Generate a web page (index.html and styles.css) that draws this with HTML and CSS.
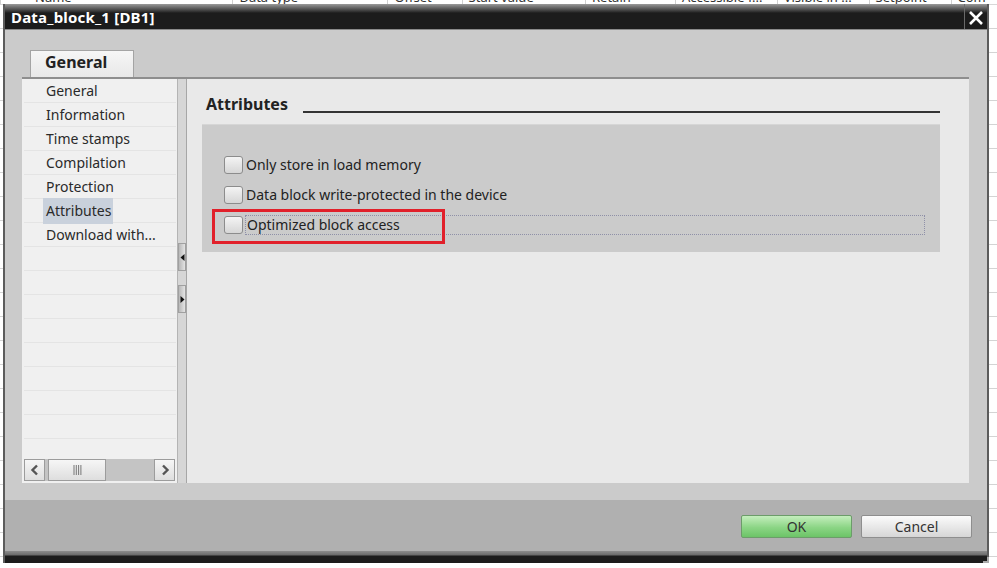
FILE: index.html
```html
<!DOCTYPE html>
<html lang="en">
<head>
    <meta charset="UTF-8">
    <title>Data_block_1 [DB1]</title>
    <link rel="stylesheet" href="styles.css">
</head>
<body>
    <!-- block editor table behind the dialog -->
    <div class="sheet">
        <div class="sheet-head">
            <span class="col c1">Name</span>
            <span class="col c2">Data type</span>
            <span class="col c3">Offset</span>
            <span class="col c4">Start value</span>
            <span class="col c5">Retain</span>
            <span class="col c6">Accessible f...</span>
            <span class="col c7">Visible in ...</span>
            <span class="col c8">Setpoint</span>
            <span class="col c9">Com</span>
        </div>
        <div class="sheet-row"></div><div class="sheet-row"></div><div class="sheet-row"></div>
        <div class="sheet-row"></div><div class="sheet-row"></div><div class="sheet-row"></div>
        <div class="sheet-row"></div><div class="sheet-row"></div><div class="sheet-row"></div>
        <div class="sheet-row"></div><div class="sheet-row"></div><div class="sheet-row"></div>
        <div class="sheet-row"></div><div class="sheet-row"></div><div class="sheet-row"></div>
        <div class="sheet-row"></div><div class="sheet-row"></div><div class="sheet-row"></div>
        <div class="sheet-row"></div><div class="sheet-row"></div><div class="sheet-row"></div>
        <div class="sheet-row"></div><div class="sheet-row"></div>
    </div>

    <div class="dialog">
        <div class="titlebar">
            <span class="title">Data_block_1 [DB1]</span>
            <span class="close">
                <svg width="16" height="16" viewBox="0 0 16 16"><path d="M2 2 L14 14 M14 2 L2 14" stroke="#fff" stroke-width="2.6" fill="none"/></svg>
            </span>
        </div>

        <div class="body">
            <div class="tabs">
                <div class="tab">General</div>
            </div>
            <div class="frame">
                <div class="nav">
                    <ul class="nav-list">
                        <li>General</li>
                        <li>Information</li>
                        <li>Time stamps</li>
                        <li>Compilation</li>
                        <li>Protection</li>
                        <li><span class="selected">Attributes</span></li>
                        <li>Download with...</li>
                        <li></li><li></li><li></li><li></li><li></li>
                        <li></li><li></li><li></li><li></li>
                    </ul>
                    <div class="hscroll">
                        <span class="sbtn">
                            <svg width="10" height="12" viewBox="0 0 10 12"><path d="M7 1.5 L2.5 6 L7 10.5" stroke="#555" stroke-width="2.4" fill="none"/></svg>
                        </span>
                        <span class="thumb">
                            <svg width="9" height="10" viewBox="0 0 9 10"><path d="M1 0v10M3.3 0v10M5.6 0v10M7.9 0v10" stroke="#777" stroke-width="1"/></svg>
                        </span>
                        <span class="track"></span>
                        <span class="sbtn">
                            <svg width="10" height="12" viewBox="0 0 10 12"><path d="M3 1.5 L7.5 6 L3 10.5" stroke="#555" stroke-width="2.4" fill="none"/></svg>
                        </span>
                    </div>
                </div>

                <div class="splitter">
                    <span class="split-btn"><svg width="5" height="7" viewBox="0 0 5 7"><path d="M4.5 0 L0.5 3.5 L4.5 7Z" fill="#111"/></svg></span>
                    <span class="split-btn"><svg width="5" height="7" viewBox="0 0 5 7"><path d="M0.5 0 L4.5 3.5 L0.5 7Z" fill="#111"/></svg></span>
                </div>

                <div class="pane">
                    <div class="section-head">
                        <span class="section-title">Attributes</span>
                        <span class="section-line"></span>
                    </div>
                    <div class="options">
                        <label class="option">
                            <span class="check"></span>
                            <span class="option-text">Only store in load memory</span>
                        </label>
                        <label class="option">
                            <span class="check"></span>
                            <span class="option-text">Data block write-protected in the device</span>
                        </label>
                        <label class="option">
                            <span class="check"></span>
                            <span class="option-text focused">Optimized block access</span>
                            <span class="marker"></span>
                        </label>
                    </div>
                </div>
            </div>
        </div>

        <div class="buttonbar">
            <button class="btn btn-ok">OK</button>
            <button class="btn">Cancel</button>
        </div>
        <div class="bottom-edge"><span class="grip"></span></div>
    </div>
</body>
</html>
```

FILE: styles.css
```css
body {
    margin: 0;
    width: 997px;
    height: 568px;
    overflow: hidden;
    background-color: #fff;
    font-family: "Noto Sans", "DejaVu Sans", sans-serif;
    color: #222;
    position: relative;
}

/* table of the block editor, mostly hidden by the dialog */
.sheet {
    width: 997px;
}

.sheet-head {
    display: flex;
    height: 4px;
    overflow: hidden;
    border-bottom: 1px solid #d8d8d8;
}

.sheet-head .col {
    display: block;
    font-size: 13px;
    line-height: 14px;
    margin-top: -10px;
    color: #333;
    border-left: 1px solid #d0d0d0;
    padding-left: 6px;
    white-space: nowrap;
    overflow: hidden;
}

.c1 { width: 200px; padding-left: 34px !important; }
.c2 { width: 150px; }
.c3 { width: 68px; }
.c4 { width: 118px; }
.c5 { width: 84px; }
.c6 { width: 96px; }
.c7 { width: 86px; }
.c8 { width: 76px; }
.c9 { width: 40px; }

.sheet-row {
    height: 23px;
    border-bottom: 1px solid #d4d4d4;
}

/* dialog window */
.dialog {
    position: absolute;
    left: 3px;
    top: 4px;
    width: 982px;
    height: 559px;
    border-left: 2px solid #5c5c5c;
    border-right: 2px solid #5c5c5c;
    display: flex;
    flex-direction: column;
    background-color: #cbcbcb;
}

.titlebar {
    height: 25px;
    flex-shrink: 0;
    display: flex;
    align-items: center;
    justify-content: space-between;
    background: linear-gradient(#9a9a9a 0, #3a3a3a 7px, #1c1c1c 9px, #1c1c1c 100%);
    border-bottom: 1px solid #8a8a8a;
}

.title {
    color: #fff;
    font-weight: bold;
    font-size: 15px;
    padding-left: 6px;
    padding-top: 1px;
    letter-spacing: 0.2px;
}

.close {
    width: 23px;
    height: 25px;
    display: flex;
    align-items: center;
    justify-content: center;
    border-left: 1px solid #6a6a6a;
    padding-top: 2px;
    box-sizing: border-box;
}

.body {
    height: 470px;
    flex-shrink: 0;
    padding: 20px 18px 0 17px;
    box-sizing: border-box;
}

.tabs {
    display: flex;
    height: 27px;
    padding-left: 8px;
}

.tab {
    width: 104px;
    height: 27px;
    box-sizing: border-box;
    border: 1px solid #a4a4a4;
    border-bottom: none;
    background: linear-gradient(#f6f6f6, #e8e8e8);
    font-weight: bold;
    font-size: 16px;
    line-height: 22px;
    padding-left: 14px;
    color: #222;
}

.frame {
    display: flex;
    height: 406px;
    border-top: 2px solid #8e8e8e;
    box-sizing: border-box;
}

/* left navigation */
.nav {
    width: 155px;
    background-color: #f0f0f0;
    display: flex;
    flex-direction: column;
}

.nav-list {
    list-style: none;
    margin: 0;
    padding: 0 1px 0 2px;
    flex: 1;
    overflow: hidden;
}

.nav-list li {
    height: 23px;
    border-bottom: 1px solid #e4e4e4;
    font-size: 14px;
    line-height: 23px;
    padding-left: 22px;
    color: #2a2a2a;
}

.selected {
    background-color: #c9d1dc;
    padding: 3px 2px 4px 3px;
    margin-left: -3px;
}

.hscroll {
    display: flex;
    height: 22px;
    margin: 0 2px 2px 2px;
    background-color: #c4c4c4;
}

.sbtn,
.thumb {
    box-sizing: border-box;
    border: 1px solid #9c9c9c;
    background: linear-gradient(#f6f6f6, #dedede);
    display: flex;
    align-items: center;
    justify-content: center;
}

.sbtn {
    width: 21px;
}

.thumb {
    width: 58px;
    margin-left: 3px;
}

.track {
    flex: 1;
}

.splitter {
    width: 10px;
    box-sizing: border-box;
    border-left: 1px solid #b4b4b4;
    border-right: 1px solid #a6a6a6;
    background-color: #d6d6d6;
    display: flex;
    flex-direction: column;
    align-items: center;
    padding-top: 164px;
    gap: 14px;
}

.split-btn {
    width: 8px;
    height: 28px;
    box-sizing: border-box;
    border: 1px solid #a0a0a0;
    background: linear-gradient(90deg, #b8b8b8, #e4e4e4);
    display: flex;
    align-items: center;
    justify-content: center;
}

/* right pane */
.pane {
    flex: 1;
    background-color: #e9e9e9;
    padding: 13px 29px 0 15px;
}

.section-head {
    display: flex;
    height: 23px;
    padding-left: 4px;
}

.section-title {
    font-weight: bold;
    font-size: 16px;
    line-height: 24px;
    color: #222;
}

.section-line {
    flex: 1;
    margin-left: 15px;
    align-self: flex-end;
    margin-bottom: 2px;
    border-bottom: 2px solid #333;
}

.options {
    margin-top: 9px;
    background-color: #cbcbcb;
    border-top: 1px solid #d6d6d6;
    padding: 30px 15px 17px 22px;
    display: flex;
    flex-direction: column;
    gap: 10px;
}

.option {
    display: flex;
    align-items: center;
    height: 20px;
    position: relative;
}

.check {
    width: 19px;
    height: 18px;
    box-sizing: border-box;
    border: 1px solid #8c8c8c;
    border-radius: 3px;
    background: linear-gradient(#f4f4f4, #d6d6d6);
    margin-right: 2px;
}

.option-text {
    font-size: 14px;
    color: #222;
    padding-left: 1px;
    line-height: 18px;
}

.focused {
    flex: 1;
    height: 20px;
    box-sizing: border-box;
    border: 1px dotted #8f90a8;
}

/* red marker around the optimized access option */
.marker {
    position: absolute;
    left: -12px;
    top: -6px;
    width: 233px;
    height: 35px;
    box-sizing: border-box;
    border: 3px solid #e1202a;
}

/* OK / Cancel */
.buttonbar {
    height: 51px;
    flex-shrink: 0;
    background-color: #b0b0b0;
    display: flex;
    justify-content: flex-end;
    align-items: flex-start;
    gap: 9px;
    padding: 15px 15px 0 0;
    box-sizing: border-box;
}

.btn {
    width: 111px;
    height: 23px;
    border: 1px solid #8e8e8e;
    border-radius: 2px;
    background: linear-gradient(#fbfbfb, #d6d6d6);
    font-family: "Noto Sans", "DejaVu Sans", sans-serif;
    font-size: 14px;
    color: #333;
    padding: 0;
}

.btn-ok {
    border-color: #6c9c6a;
    background: linear-gradient(#c4eebd, #8bd585 55%, #6cc467);
}

.bottom-edge {
    flex: 1;
    background: linear-gradient(#8c8c8c 0, #6a6a6a 4px, #1c1c1c 5px);
    position: relative;
}

.grip {
    position: absolute;
    right: -2px;
    bottom: 0;
    width: 6px;
    height: 6px;
    border-right: 2px solid #aaa;
    border-bottom: 2px solid #aaa;
    box-sizing: border-box;
}
```
